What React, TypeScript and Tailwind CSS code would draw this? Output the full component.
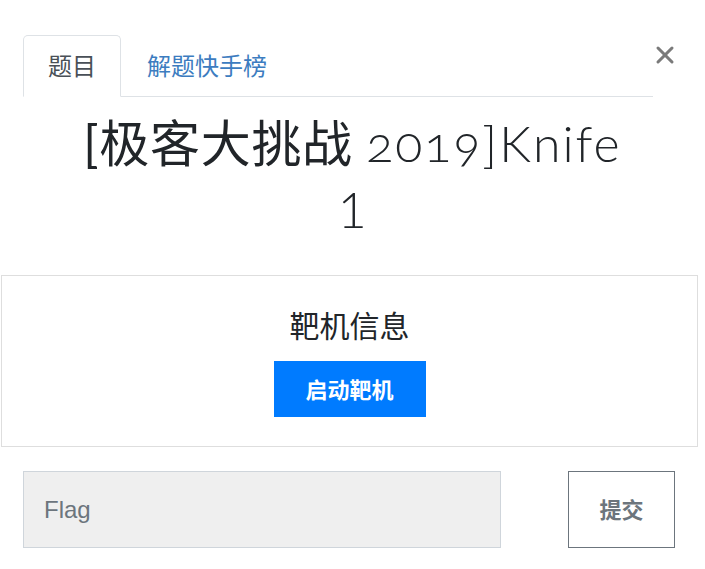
import { X } from "lucide-react"

const tabs = [
  { label: "题目", active: true },
  { label: "解题快手榜", active: false },
]

export default function App() {
  return (
    <div
      className="w-[705px] h-[569px] bg-white overflow-hidden"
      style={{ fontFamily: '"Noto Sans", "Noto Sans CJK SC", sans-serif' }}
    >
      {/* Header tabs */}
      <div className="flex items-start pt-[35px] pl-[23px]">
        <ul className="flex w-[630px] border-b border-[#dee2e6]">
          {tabs.map((tab) =>
            tab.active ? (
              <li
                key={tab.label}
                className="-mb-px h-[62px] w-[98px] flex items-center justify-center rounded-t-[5px] border border-[#dee2e6] border-b-white bg-white text-[24px] text-[#495057]"
              >
                {tab.label}
              </li>
            ) : (
              <li
                key={tab.label}
                className="h-[61px] flex items-center px-[26px] text-[24px] text-[#3c7cc0]"
              >
                {tab.label}
              </li>
            )
          )}
        </ul>
        <button className="mt-[6px] -ml-[2px] text-[#7a7a7a]" aria-label="Close">
          <X className="w-[28px] h-[28px]" strokeWidth={2.6} />
        </button>
      </div>

      {/* Title */}
      <h3
        className="mt-[13px] text-center text-[50px] leading-[66px] font-normal tracking-[0.7px] text-[#212529]"
        style={{ fontFamily: 'Lato, "Noto Sans CJK SC", sans-serif' }}
      >
        [极客大挑战{" "}
        <span className="font-light tracking-[2px]">
          <span className="oldstyle-nums">2019</span>]Knife
        </span>
        <br />
        <span className="font-light">1</span>
      </h3>

      {/* Target machine card */}
      <div className="mt-[33px] ml-[1px] w-[697px] h-[172px] border border-[#dedede] flex flex-col items-center">
        <div className="mt-[29px] text-[30px] leading-[42px] text-[#212529]">靶机信息</div>
        <button className="mt-[14px] w-[152px] h-[56px] bg-[#007bff] text-white text-[22px] font-bold">
          启动靶机
        </button>
      </div>

      {/* Flag form */}
      <div className="mt-[24px] pl-[23px] flex items-center">
        <div className="w-[478px] h-[77px] bg-[#efefef] border border-[#cfd5db] flex items-center pl-[20px]">
          <span
            className="text-[24px] text-[#6c757d]"
            style={{ fontFamily: '"Liberation Sans", Arial, sans-serif' }}
          >
            Flag
          </span>
        </div>
        <button className="ml-[67px] w-[107px] h-[77px] border border-[#6c757d] text-[#6c757d] text-[22px] font-bold">
          提交
        </button>
      </div>
    </div>
  )
}
